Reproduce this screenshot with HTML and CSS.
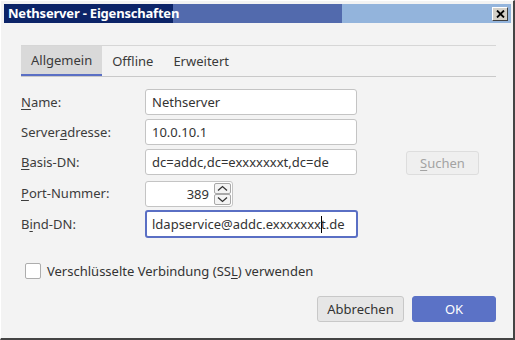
FILE: index.html
```html
<!DOCTYPE html>
<html lang="de">
<head>
<meta charset="utf-8">
<title>Nethserver - Eigenschaften</title>
<link rel="stylesheet" href="styles.css">
</head>
<body>
<div class="window">
  <div class="titlebar">
    <span class="title">Nethserver - Eigenschaften</span>
    <span class="close">
      <svg width="9" height="8" viewBox="0 0 9 8"><path d="M1 0.5 L8 7.5 M8 0.5 L1 7.5" stroke="#000" stroke-width="1.8" fill="none"/></svg>
    </span>
  </div>
  <div class="content">
    <div class="tabs">
      <div class="tab active">Allgemein</div>
      <div class="tab">Offline</div>
      <div class="tab">Erweitert</div>
    </div>
    <div class="form">
      <label class="lbl"><u>N</u>ame:</label>
      <div class="field">Nethserver</div>
      <div></div><div></div>

      <label class="lbl">Server<u>a</u>dresse:</label>
      <div class="field">10.0.10.1</div>
      <div></div><div></div>

      <label class="lbl"><u>B</u>asis-DN:</label>
      <div class="field">dc=addc,dc=exxxxxxxt,dc=de</div>
      <div></div>
      <div class="btn disabled"><u>S</u>uchen</div>

      <label class="lbl"><u>P</u>ort-Nummer:</label>
      <div class="spin">
        <span class="spin-val">389</span>
        <span class="spin-btns">
          <span class="sb"><svg width="11" height="7" viewBox="0 0 11 7"><path d="M1 5.5 L5.5 1.5 L10 5.5" stroke="#333" stroke-width="1.3" fill="none"/></svg></span>
          <span class="sb"><svg width="11" height="7" viewBox="0 0 11 7"><path d="M1 1.5 L5.5 5.5 L10 1.5" stroke="#333" stroke-width="1.3" fill="none"/></svg></span>
        </span>
      </div>
      <div></div><div></div>

      <label class="lbl">B<u>i</u>nd-DN:</label>
      <div class="field focus">ldapservice@addc.exxxxxxx<span class="caret"></span>t.de</div>
      <div></div><div></div>
    </div>
    <div class="check-row">
      <span class="checkbox"></span>
      <span class="check-label">Verschlüsselte Verbindung (SS<u>L</u>) verwenden</span>
    </div>
    <div class="actions">
      <div class="btn">Abbrechen</div>
      <div class="btn primary">OK</div>
    </div>
  </div>
</div>
</body>
</html>
```
FILE: styles.css
```css
html, body {
  margin: 0;
  padding: 0;
  background: #f2f2f2;
}
body {
  font-family: "Noto Sans", "DejaVu Sans", sans-serif;
  font-size: 13px;
  color: #3c3c3c;
}
.window {
  box-sizing: border-box;
  width: 515px;
  height: 340px;
  background: #f3f3f3;
  border-left: 1px solid #ffffff;
  border-top: 1px solid #ffffff;
  border-right: 2px solid #444444;
  border-bottom: 2px solid #444444;
  padding: 3px 2px 0 3px;
  display: flex;
  flex-direction: column;
}
.titlebar {
  height: 19px;
  display: flex;
  align-items: center;
  justify-content: space-between;
  background: linear-gradient(to right, #0c2468 0, #0c2468 169px, #526aad 169px, #526aad 338px, #93b4dc 338px);
  padding: 0 3px 0 4px;
}
.title {
  color: #ffffff;
  font-weight: bold;
  font-size: 13px;
  line-height: 19px;
  letter-spacing: -0.2px;
}
.close {
  box-sizing: border-box;
  width: 16px;
  height: 14px;
  background: #d4d0c8;
  border-top: 1px solid #ffffff;
  border-left: 1px solid #ffffff;
  border-right: 1px solid #404040;
  border-bottom: 1px solid #404040;
  display: flex;
  align-items: center;
  justify-content: center;
}
.content {
  padding: 22px 15px 0 17px;
  display: flex;
  flex-direction: column;
}
.tabs {
  display: flex;
  border-top: 1px solid #d6d6d6;
  border-bottom: 1px solid #c9c9c9;
  height: 30px;
}
.tab {
  padding: 0 10px;
  line-height: 30px;
  color: #3a3a3a;
  box-sizing: border-box;
}
.tab.active {
  background: #d9d9d9;
  border-bottom: 2px solid #5a6fc4;
  line-height: 28px;
}
.form {
  margin-top: 12px;
  display: grid;
  grid-template-columns: 124px 212px 49px 73px;
  grid-template-rows: 26px 26px 26px 27px 28px;
  row-gap: 4px;
  align-items: center;
}
.lbl {
  line-height: 26px;
}
u {
  text-decoration-thickness: 1px;
  text-underline-offset: 2px;
}
.field {
  box-sizing: border-box;
  height: 26px;
  background: #ffffff;
  border: 1px solid #c4c4c4;
  border-radius: 3px;
  padding: 0 6px;
  line-height: 24px;
  color: #333333;
  white-space: nowrap;
  overflow: hidden;
}
.field.focus {
  height: 28px;
  border: 2px solid #5a6fc4;
  padding: 0 5px;
  line-height: 24px;
  width: 213px;
}
.caret {
  display: inline-block;
  width: 1px;
  height: 17px;
  background: #000;
  vertical-align: -4px;
  margin-right: -1px;
}
.spin {
  box-sizing: border-box;
  width: 88px;
  height: 26px;
  margin-top: 2px;
  align-self: start;
  background: #ffffff;
  border: 1px solid #c4c4c4;
  border-radius: 3px;
  display: flex;
  align-items: center;
  justify-content: flex-end;
  padding-right: 1px;
  color: #333;
}
.spin-val {
  margin-right: 5px;
}
.spin-btns {
  display: flex;
  flex-direction: column;
}
.sb {
  box-sizing: border-box;
  width: 17px;
  height: 11px;
  border: 1px solid #a8a8a8;
  border-radius: 2px;
  background: #f4f4f4;
  display: flex;
  align-items: center;
  justify-content: center;
}
.btn {
  box-sizing: border-box;
  height: 26px;
  border: 1px solid #c8c8c8;
  border-radius: 3px;
  background: #e6e6e6;
  display: flex;
  align-items: center;
  justify-content: center;
  color: #333;
}
.btn.disabled {
  height: 24px;
  align-self: end;
  background: #efefef;
  border-color: #dddddd;
  color: #a3a3a3;
}
.check-row {
  margin-top: 25px;
  display: flex;
  align-items: center;
  height: 16px;
}
.checkbox {
  box-sizing: border-box;
  width: 16px;
  height: 16px;
  margin-left: 4px;
  background: #ffffff;
  border: 1px solid #adadad;
  border-radius: 2px;
}
.check-label {
  margin-left: 6px;
  color: #333;
}
.actions {
  margin-top: 17px;
  display: flex;
  justify-content: flex-end;
  gap: 8px;
}
.actions .btn {
  width: 87px;
}
.actions .btn.primary {
  width: 84px;
  background: #5b72c6;
  border-color: #5b72c6;
  color: #ffffff;
}
```
